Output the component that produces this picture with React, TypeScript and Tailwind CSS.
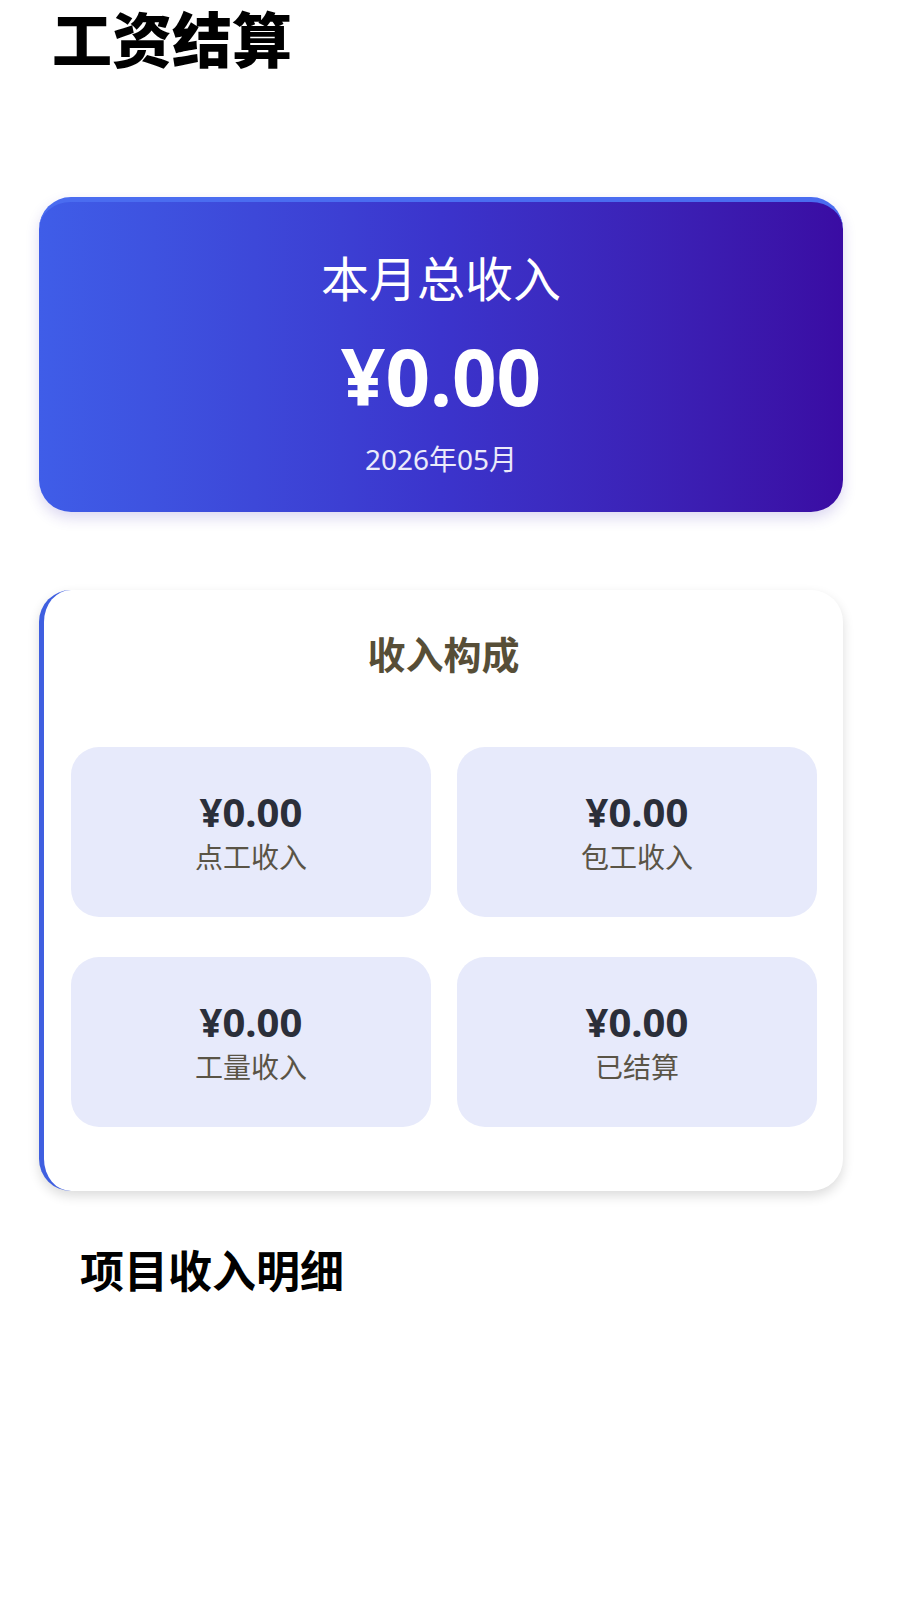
const FONT = { fontFamily: '"Noto Sans", "Noto Sans CJK SC", sans-serif' };

const ITEMS = [
  { amount: "¥0.00", label: "点工收入" },
  { amount: "¥0.00", label: "包工收入" },
  { amount: "¥0.00", label: "工量收入" },
  { amount: "¥0.00", label: "已结算" },
];

export default function App() {
  return (
    <div className="min-h-[1600px] w-[900px] bg-white" style={FONT}>
      {/* Header */}
      <h1 className="pl-[52px] pt-[5px] text-[60px] font-black leading-[70px] text-black">
        工资结算
      </h1>

      {/* Monthly total */}
      <div className="ml-[39px] mt-[122px] flex h-[315px] w-[804px] flex-col items-center rounded-[32px] border-t-[5px] border-[#4a6cf0] bg-gradient-to-r from-[#3f5de8] via-[#3b34cc] to-[#3a0ca3] text-white shadow-[0_6px_14px_rgba(60,40,180,0.18)]">
        <div className="mt-[47px] text-[48px] leading-[60px]">本月总收入</div>
        <div className="mt-[22px] text-[78px] font-bold leading-[90px]">¥0.00</div>
        <div className="mt-[20px] text-[28px] leading-[36px] text-white/90">2026年05月</div>
      </div>

      {/* Income breakdown */}
      <div className="ml-[39px] mt-[78px] w-[804px] rounded-[32px] border-l-[5px] border-[#3f5fe0] bg-white pb-[64px] shadow-[0_5px_12px_rgba(0,0,0,0.14)]">
        <h2 className="pt-[30px] text-center text-[38px] font-bold leading-[68px] text-[#574e37]">
          收入构成
        </h2>
        <div className="mt-[59px] grid grid-cols-2 gap-x-[26px] gap-y-[40px] pl-[27px] pr-[26px]">
          {ITEMS.map((item) => (
            <div
              key={item.label}
              className="flex h-[170px] flex-col items-center justify-center rounded-[28px] bg-[#e7eafb]"
            >
              <div className="text-[40px] font-bold leading-[50px] text-[#2b2f3a]">{item.amount}</div>
              <div className="text-[28px] leading-[40px] text-[#5a5446]">{item.label}</div>
            </div>
          ))}
        </div>
      </div>

      <h2 className="mt-[50px] pl-[80px] text-[44px] font-bold leading-[60px] text-black">
        项目收入明细
      </h2>
    </div>
  );
}
